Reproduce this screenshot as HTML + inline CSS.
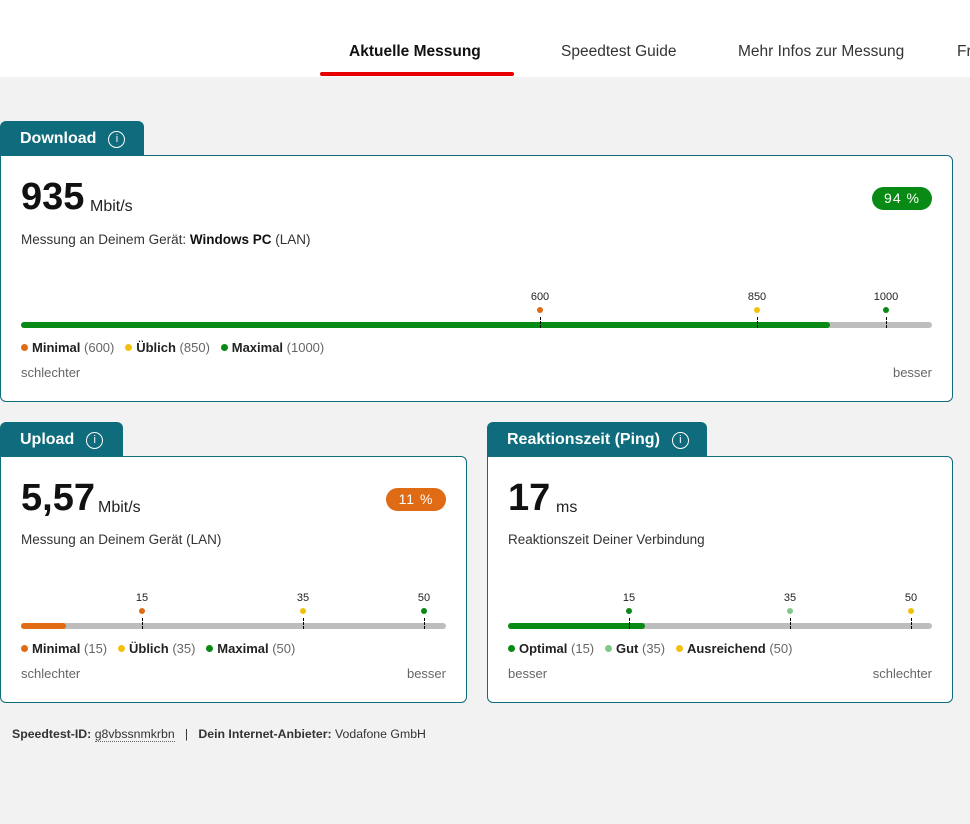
<!DOCTYPE html>
<html><head><meta charset="utf-8"><style>
*{box-sizing:border-box;margin:0;padding:0}
body{width:970px;height:824px;background:#f2f2f2;font-family:"Liberation Sans",sans-serif;color:#222;position:relative;overflow:hidden}
.a{position:absolute;white-space:nowrap}
.hdr{position:absolute;left:0;top:0;width:970px;height:77px;background:#fff}
.nav{font-size:15.5px;top:43px;color:#333}
.tab{position:absolute;height:35px;background:#0e6c7c;border-radius:6px 6px 0 0;color:#fff;font-weight:bold;font-size:16px;padding:9px 0 0 20px}
.tab i{display:inline-block;width:17px;height:17px;border:1.5px solid #fff;border-radius:50%;font-style:normal;font-size:11px;text-align:center;line-height:14px;font-weight:normal;margin-left:12px;vertical-align:1px}
.card{position:absolute;background:#fff;border:1px solid #0e6c7c;border-radius:0 6px 6px 6px}
.big{font-size:38px;font-weight:bold;color:#111}
.unit{font-size:16px;color:#222}
.sub{font-size:13.5px;color:#333}
.badge{position:absolute;height:23px;border-radius:12px;color:#fff;font-size:14px;text-align:center;line-height:23px;letter-spacing:1px}
.bar{position:absolute;height:6px;background:#bdbdbd;border-radius:3px}
.fill{position:absolute;left:0;top:0;height:6px;border-radius:3px}
.tk{position:absolute;width:1px;height:11px;border-left:1px dashed #000}
.dot{position:absolute;width:6px;height:6px;border-radius:50%}
.lbl{position:absolute;font-size:11px;color:#222;transform:translateX(-50%)}
.leg{font-size:13px;color:#666}
.leg b{color:#222}
.leg s{display:inline-block;width:7px;height:7px;border-radius:50%;text-decoration:none;margin-right:4px;vertical-align:1px}
.sm{font-size:13px;color:#666}
</style></head><body>
<div class="hdr"></div>
<div class="a nav" style="left:349px;font-weight:bold;color:#111">Aktuelle Messung</div>
<div class="a nav" style="left:561px">Speedtest Guide</div>
<div class="a nav" style="left:738px">Mehr Infos zur Messung</div>
<div class="a nav" style="left:957px">Fr</div>
<div class="a" style="left:320px;top:72px;width:194px;height:4px;background:#e60000;border-radius:2px"></div>

<div class="tab" style="left:0;top:121px;width:144px">Download<i>i</i></div>
<div class="card" style="left:0;top:155px;width:953px;height:247px"></div>
<div class="a big" style="left:21px;top:176px">935</div>
<div class="a unit" style="left:90px;top:198px">Mbit/s</div>
<div class="badge" style="left:872px;top:187px;width:60px;background:#088a14">94 %</div>
<div class="a sub" style="left:21px;top:232px">Messung an Deinem Gerät: <b style="color:#111">Windows PC</b> (LAN)</div>
<div class="bar" style="left:21px;top:322px;width:911px"><div class="fill" style="width:809px;background:#088a14"></div></div>
<div class="lbl" style="left:540px;top:291px">600</div><div class="dot" style="left:537px;top:307px;background:#e06b15"></div><div class="tk" style="left:540px;top:317px"></div>
<div class="lbl" style="left:757px;top:291px">850</div><div class="dot" style="left:754px;top:307px;background:#f2c10f"></div><div class="tk" style="left:757px;top:317px"></div>
<div class="lbl" style="left:886px;top:291px">1000</div><div class="dot" style="left:883px;top:307px;background:#088a14"></div><div class="tk" style="left:886px;top:317px"></div>
<div class="a leg" style="left:21px;top:340px"><s style="background:#e06b15"></s><b>Minimal</b> (600) &nbsp; <s style="background:#f2c10f"></s><b>Üblich</b> (850) &nbsp; <s style="background:#088a14"></s><b>Maximal</b> (1000)</div>
<div class="a sm" style="left:21px;top:365px">schlechter</div>
<div class="a sm" style="right:38px;top:365px">besser</div>

<div class="tab" style="left:0;top:422px;width:123px">Upload<i>i</i></div>
<div class="card" style="left:0;top:456px;width:467px;height:247px"></div>
<div class="a big" style="left:21px;top:477px">5,57</div>
<div class="a unit" style="left:98px;top:499px">Mbit/s</div>
<div class="badge" style="left:386px;top:488px;width:60px;background:#e06b15">11 %</div>
<div class="a sub" style="left:21px;top:532px">Messung an Deinem Gerät (LAN)</div>
<div class="bar" style="left:21px;top:623px;width:425px"><div class="fill" style="width:45px;background:#e06b15"></div></div>
<div class="lbl" style="left:142px;top:592px">15</div><div class="dot" style="left:139px;top:608px;background:#e06b15"></div><div class="tk" style="left:142px;top:618px"></div>
<div class="lbl" style="left:303px;top:592px">35</div><div class="dot" style="left:300px;top:608px;background:#f2c10f"></div><div class="tk" style="left:303px;top:618px"></div>
<div class="lbl" style="left:424px;top:592px">50</div><div class="dot" style="left:421px;top:608px;background:#088a14"></div><div class="tk" style="left:424px;top:618px"></div>
<div class="a leg" style="left:21px;top:641px"><s style="background:#e06b15"></s><b>Minimal</b> (15) &nbsp; <s style="background:#f2c10f"></s><b>Üblich</b> (35) &nbsp; <s style="background:#088a14"></s><b>Maximal</b> (50)</div>
<div class="a sm" style="left:21px;top:666px">schlechter</div>
<div class="a sm" style="right:524px;top:666px">besser</div>

<div class="tab" style="left:487px;top:422px;width:220px">Reaktionszeit (Ping)<i>i</i></div>
<div class="card" style="left:487px;top:456px;width:466px;height:247px"></div>
<div class="a big" style="left:508px;top:477px">17</div>
<div class="a unit" style="left:556px;top:499px">ms</div>
<div class="a sub" style="left:508px;top:532px">Reaktionszeit Deiner Verbindung</div>
<div class="bar" style="left:508px;top:623px;width:424px"><div class="fill" style="width:137px;background:#088a14"></div></div>
<div class="lbl" style="left:629px;top:592px">15</div><div class="dot" style="left:626px;top:608px;background:#088a14"></div><div class="tk" style="left:629px;top:618px"></div>
<div class="lbl" style="left:790px;top:592px">35</div><div class="dot" style="left:787px;top:608px;background:#7fc88a"></div><div class="tk" style="left:790px;top:618px"></div>
<div class="lbl" style="left:911px;top:592px">50</div><div class="dot" style="left:908px;top:608px;background:#f2c10f"></div><div class="tk" style="left:911px;top:618px"></div>
<div class="a leg" style="left:508px;top:641px"><s style="background:#088a14"></s><b>Optimal</b> (15) &nbsp; <s style="background:#7fc88a"></s><b>Gut</b> (35) &nbsp; <s style="background:#f2c10f"></s><b>Ausreichend</b> (50)</div>
<div class="a sm" style="left:508px;top:666px">besser</div>
<div class="a sm" style="right:38px;top:666px">schlechter</div>

<div class="a" style="left:12px;top:727px;font-size:12.3px;color:#333"><b>Speedtest-ID:</b> <span style="border-bottom:1px dotted #666">g8vbssnmkrbn</span> &nbsp; | &nbsp; <b>Dein Internet-Anbieter:</b> Vodafone GmbH</div>
</body></html>
